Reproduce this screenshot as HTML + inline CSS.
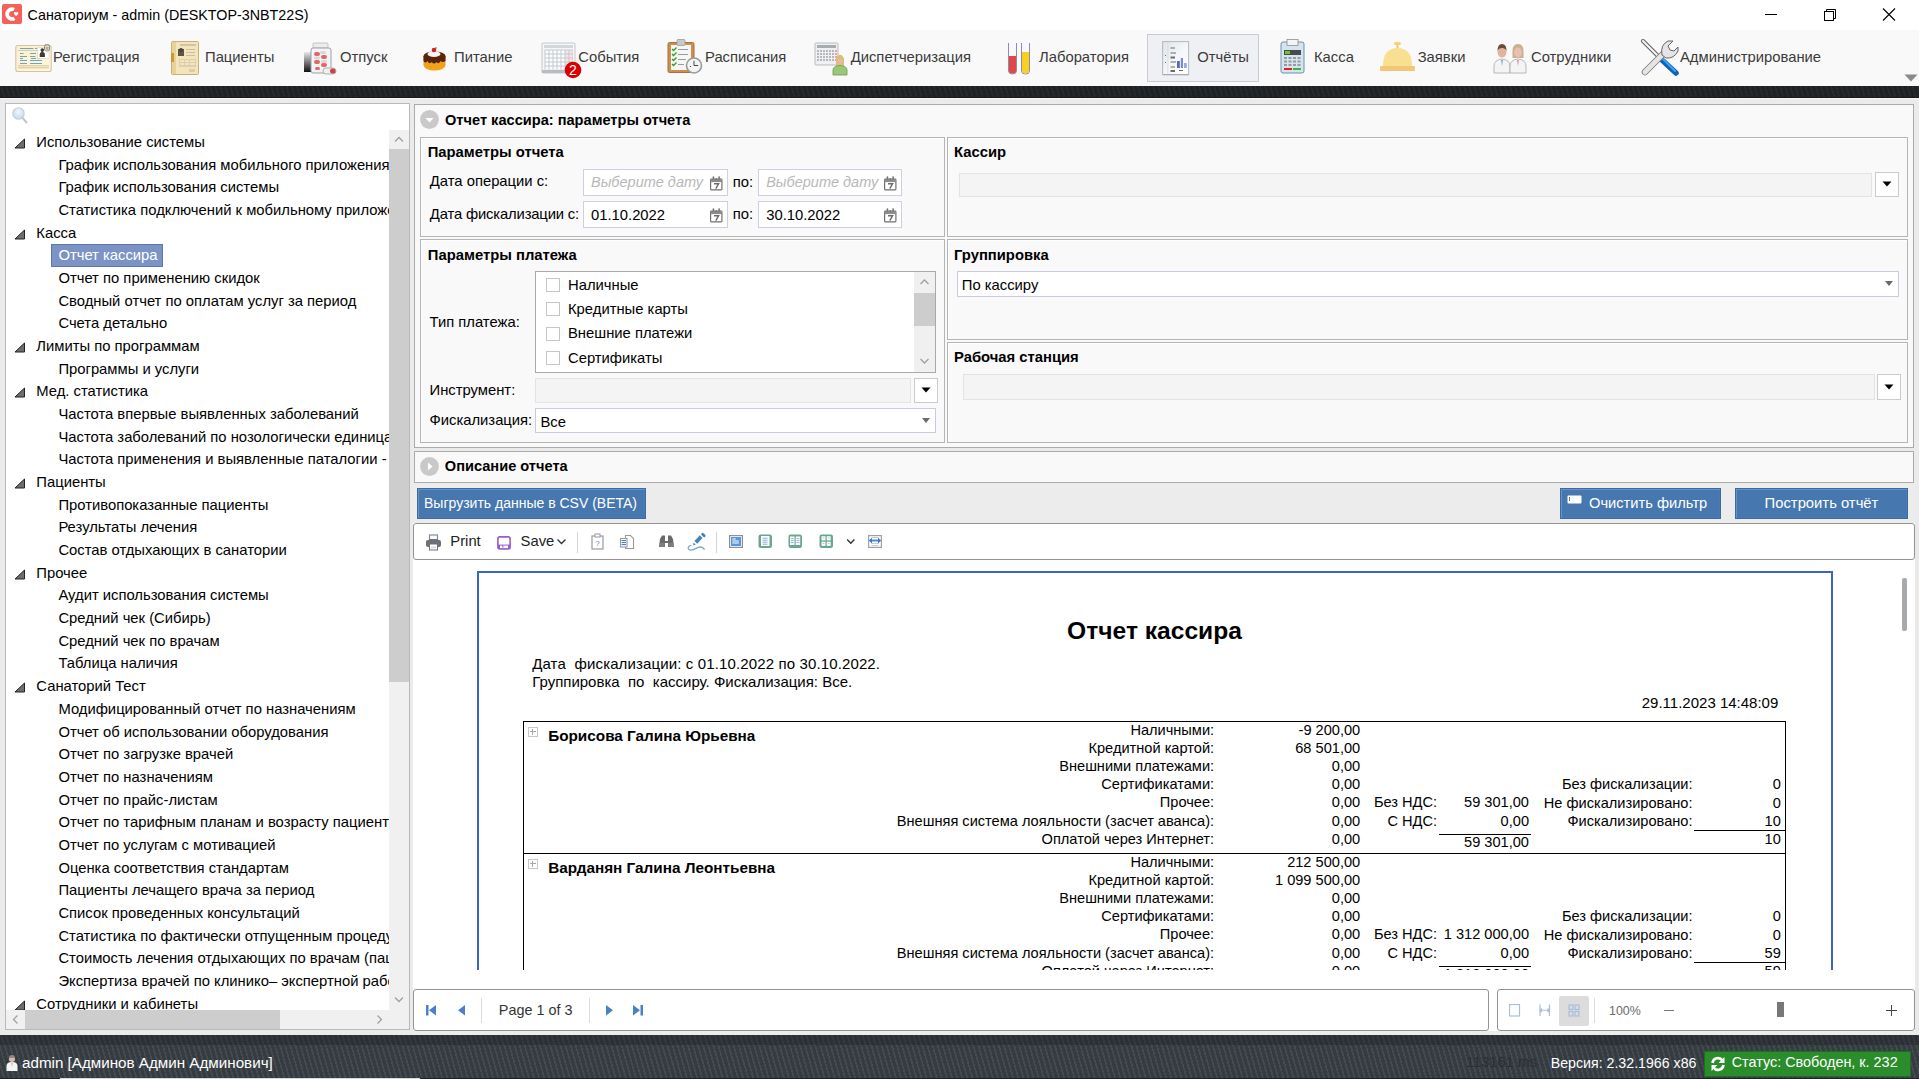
<!DOCTYPE html><html><head><meta charset="utf-8"><title>Санаториум</title><style>
html,body{margin:0;padding:0;}
body{width:1919px;height:1079px;overflow:hidden;position:relative;background:#ebebeb;font-family:"Liberation Sans", sans-serif;color:#000;}
.t{position:absolute;white-space:pre;}
.b{position:absolute;box-sizing:border-box;}
.stripe{background-image:repeating-linear-gradient(74deg, rgba(0,0,0,0) 0px, rgba(0,0,0,0) 3.2px, var(--sc) 3.2px, var(--sc) 4.9px);}

</style></head><body>
<div class="b" style="left:0px;top:0px;width:1919px;height:30px;background:#fff;"></div>
<svg class="b" style="left:2px;top:4px;" width="20" height="20" viewBox="0 0 20 20"><rect x="0" y="0" width="20" height="20" rx="2" fill="#f4605a"/><path d="M12.1 5.6 A4.9 4.9 0 1 0 12.5 14.3" stroke="#fff" stroke-width="3.7" fill="none"/><path d="M14.1 12.3 L12.1 9.9 A1.2 1.2 0 0 1 14.1 8.5 A1.2 1.2 0 0 1 16.1 9.9 Z" fill="#fff"/></svg>
<div class="t" style="left:27.5px;top:7.6px;font-size:14.3px;line-height:14.3px;">Санаториум - admin (DESKTOP-3NBT22S)</div>
<div class="b" style="left:1765px;top:14px;width:12px;height:1px;background:#000;"></div>
<svg class="b" style="left:1822px;top:7px;" width="16" height="16" viewBox="0 0 16 16"><rect x="2.5" y="4.5" width="9" height="9" fill="none" stroke="#000" stroke-width="1"/><path d="M4.5 4.5 V2.5 H13.5 V11.5 H11.5" fill="none" stroke="#000" stroke-width="1"/></svg>
<svg class="b" style="left:1881px;top:7px;" width="16" height="16" viewBox="0 0 16 16"><path d="M2 1.5 L14 13.5 M14 1.5 L2 13.5" stroke="#000" stroke-width="1.1"/></svg>
<div class="b" style="left:0px;top:30px;width:1919px;height:56px;background:#f9f9f9;"></div>
<div class="b" style="left:1147px;top:34px;width:112px;height:48px;background:#eff0f3;border:1px solid #c9ccd2;"></div>
<div class="t" style="left:53.0px;top:49.5px;font-size:14.8px;line-height:14.8px;color:#3b3b3b;">Регистрация</div>
<div class="t" style="left:205.0px;top:49.5px;font-size:14.8px;line-height:14.8px;color:#3b3b3b;">Пациенты</div>
<div class="t" style="left:340.0px;top:49.5px;font-size:14.8px;line-height:14.8px;color:#3b3b3b;">Отпуск</div>
<div class="t" style="left:454.0px;top:49.5px;font-size:14.8px;line-height:14.8px;color:#3b3b3b;">Питание</div>
<div class="t" style="left:578.3px;top:49.5px;font-size:14.8px;line-height:14.8px;color:#3b3b3b;">События</div>
<div class="t" style="left:705.0px;top:49.5px;font-size:14.8px;line-height:14.8px;color:#3b3b3b;">Расписания</div>
<div class="t" style="left:850.7px;top:49.5px;font-size:14.8px;line-height:14.8px;color:#3b3b3b;">Диспетчеризация</div>
<div class="t" style="left:1039.0px;top:49.5px;font-size:14.8px;line-height:14.8px;color:#3b3b3b;">Лаборатория</div>
<div class="t" style="left:1197.3px;top:49.5px;font-size:14.8px;line-height:14.8px;color:#3b3b3b;">Отчёты</div>
<div class="t" style="left:1314.0px;top:49.5px;font-size:14.8px;line-height:14.8px;color:#3b3b3b;">Касса</div>
<div class="t" style="left:1417.7px;top:49.5px;font-size:14.8px;line-height:14.8px;color:#3b3b3b;">Заявки</div>
<div class="t" style="left:1531.0px;top:49.5px;font-size:14.8px;line-height:14.8px;color:#3b3b3b;">Сотрудники</div>
<div class="t" style="left:1680.0px;top:49.5px;font-size:14.8px;line-height:14.8px;color:#3b3b3b;">Администрирование</div>
<svg class="b" style="left:1904px;top:74px;" width="15" height="9" viewBox="0 0 15 9"><path d="M0.5 0.5 L13.5 0.5 L7 7.5 Z" fill="#8a8a8a"/></svg>
<svg class="b" style="left:15px;top:44px;" width="38" height="30" viewBox="0 0 38 30">
    <defs><linearGradient id="gcard" x1="0" y1="0" x2="1" y2="1"><stop offset="0" stop-color="#fbefd0"/><stop offset="1" stop-color="#fff6dc"/></linearGradient></defs>
    <rect x="0.8" y="1.5" width="35.4" height="26" rx="2" fill="url(#gcard)" stroke="#d2c5a5" stroke-width="1.1"/>
    <g fill="#5a96b8" opacity="0.85"><rect x="5" y="4" width="13.5" height="1"/><rect x="20" y="4" width="2" height="1"/>
    <rect x="5" y="9" width="3.5" height="1"/><rect x="15" y="9" width="6" height="1"/>
    <rect x="5" y="12" width="7" height="1"/><rect x="15" y="12" width="5.5" height="1"/>
    <rect x="5" y="14" width="3" height="1"/><rect x="16" y="14" width="5" height="1"/><rect x="22" y="14" width="3" height="1"/>
    <rect x="5" y="16" width="7" height="1"/><rect x="15" y="16" width="12" height="1"/>
    <rect x="5" y="19" width="7" height="1"/><rect x="15" y="19" width="12" height="1"/></g>
    <rect x="3" y="6" width="24" height="1" fill="#d8cba8"/>
    <rect x="3" y="21.3" width="31" height="1" fill="#d0c2a0"/><rect x="3" y="23.3" width="31" height="1" fill="#d0c2a0"/>
    <rect x="22.5" y="3.5" width="11.5" height="11" fill="#fff" stroke="#d8d0c0" stroke-width="0.6"/>
    <path d="M24.7 13 V10 q0 -1.5 2 -2 q-1.2 -0.8 -1.2 -2.2 q0 -1.6 1.8 -1.6 q1.8 0 1.8 1.6 q0 1.4 -1.2 2.2 q2 0.5 2 2 V13 Z" fill="#3e3a34"/>
    <rect x="29.5" y="0.5" width="5" height="6.5" rx="2" fill="none" stroke="#7a7a7a" stroke-width="0.9"/><rect x="30.5" y="2.5" width="3" height="4" fill="#c0b490"/>
    </svg>
<svg class="b" style="left:171px;top:41px;" width="29" height="34" viewBox="0 0 29 34">
    <rect x="0.5" y="0.5" width="27" height="33" rx="1" fill="#f3e4bb" stroke="#c8b07a" stroke-width="1"/>
    <rect x="1" y="1" width="4" height="32" fill="#e9d29a"/><rect x="0" y="12" width="3" height="9" fill="#c89a30"/>
    <rect x="9" y="3" width="16" height="2" fill="#cfc3a8"/>
    <rect x="7" y="8" width="6" height="7" fill="#5b5448"/><circle cx="10" cy="9" r="2" fill="#4a4438"/>
    <g fill="#c9bfa8"><rect x="15" y="8" width="9" height="1"/><rect x="15" y="11" width="9" height="1"/><rect x="15" y="14" width="9" height="1"/>
    <rect x="8" y="18" width="17" height="8" fill="#dccfb0"/></g>
    <g fill="#f3e4bb"><rect x="9" y="19" width="4" height="2"/><rect x="14" y="19" width="4" height="2"/><rect x="19" y="19" width="5" height="2"/><rect x="9" y="22" width="4" height="2"/><rect x="14" y="22" width="4" height="2"/><rect x="19" y="22" width="5" height="2"/></g>
    <rect x="18" y="28" width="6" height="3" fill="#d9cdb0"/>
    </svg>
<svg class="b" style="left:303px;top:42px;" width="35" height="33" viewBox="0 0 35 33">
    <rect x="1" y="10" width="8" height="20" fill="url(#gjar)"/>
    <defs><linearGradient id="gjar" x1="0" y1="0" x2="0" y2="1"><stop offset="0" stop-color="#e8e8e8"/><stop offset="1" stop-color="#101010"/></linearGradient></defs>
    <rect x="10" y="1" width="15" height="5" rx="1" fill="#ededed" stroke="#b8b8c0" stroke-width="0.8"/>
    <rect x="8" y="6" width="20" height="25" rx="2" fill="#f4f4f6" stroke="#9ca0ac" stroke-width="1"/>
    <g fill="#e06868"><rect x="11" y="10" width="6" height="4" rx="2"/><rect x="18" y="13" width="6" height="4" rx="2"/><rect x="11" y="18" width="6" height="4" rx="2"/><rect x="18" y="21" width="6" height="4" rx="2"/><rect x="12" y="25" width="5" height="3" rx="1.5"/></g>
    <g fill="#d8d8dc"><rect x="17" y="9" width="6" height="3" rx="1.5"/><rect x="11" y="14.5" width="6" height="3" rx="1.5"/><rect x="18" y="18" width="6" height="3" rx="1.5"/></g>
    <rect x="20" y="26" width="13" height="6" rx="3" fill="#f0f0f0" stroke="#a0a0a0" stroke-width="0.8"/><rect x="27" y="26.5" width="5.5" height="5" rx="2.5" fill="#d04040"/>
    </svg>
<svg class="b" style="left:422px;top:46px;" width="26" height="26" viewBox="0 0 26 26">
    <ellipse cx="12.5" cy="19" rx="11" ry="5.5" fill="#f0a21c"/>
    <rect x="1.5" y="10" width="22" height="9" fill="#f0a21c"/>
    <ellipse cx="12.5" cy="10" rx="11" ry="4.5" fill="#5a2408"/>
    <path d="M1.5 10 V15 q2 3 4 0 q2 4 4 1 q3 3 5 0 q2 3 4 -1 q2 2 5 0 V10 z" fill="#5a2408"/>
    <ellipse cx="12" cy="8" rx="6.5" ry="3" fill="#f4f4f4"/>
    <circle cx="12" cy="4" r="2.3" fill="#d42020"/><rect x="13" y="1.5" width="2" height="1" fill="#2a9a2a"/>
    </svg>
<svg class="b" style="left:541px;top:42px;" width="36" height="33" viewBox="0 0 36 33">
    <rect x="1" y="1" width="33" height="30" rx="1" fill="#f4f6f8" stroke="#c4c8cc" stroke-width="1"/>
    <rect x="1" y="28" width="33" height="3" fill="#b8bcc0"/>
    <rect x="3" y="3" width="29" height="3" fill="#d4d8dc"/>
    <rect x="3.5" y="7.5" width="28.5" height="20" fill="#c4c8ce"/>
    <rect x="4.5" y="8.5" width="3" height="3" fill="#fbfcfd"/><rect x="8.5" y="8.5" width="3" height="3" fill="#fbfcfd"/><rect x="12.5" y="8.5" width="3" height="3" fill="#fbfcfd"/><rect x="16.5" y="8.5" width="3" height="3" fill="#fbfcfd"/><rect x="20.5" y="8.5" width="3" height="3" fill="#fbfcfd"/><rect x="24.5" y="8.5" width="3" height="3" fill="#f8e4e6"/><rect x="28.5" y="8.5" width="3" height="3" fill="#f8e4e6"/><rect x="4.5" y="12.5" width="3" height="3" fill="#fbfcfd"/><rect x="8.5" y="12.5" width="3" height="3" fill="#fbfcfd"/><rect x="12.5" y="12.5" width="3" height="3" fill="#fbfcfd"/><rect x="16.5" y="12.5" width="3" height="3" fill="#fbfcfd"/><rect x="20.5" y="12.5" width="3" height="3" fill="#fbfcfd"/><rect x="24.5" y="12.5" width="3" height="3" fill="#f8e4e6"/><rect x="28.5" y="12.5" width="3" height="3" fill="#f8e4e6"/><rect x="4.5" y="16.5" width="3" height="3" fill="#fbfcfd"/><rect x="8.5" y="16.5" width="3" height="3" fill="#fbfcfd"/><rect x="12.5" y="16.5" width="3" height="3" fill="#fbfcfd"/><rect x="16.5" y="16.5" width="3" height="3" fill="#fbfcfd"/><rect x="20.5" y="16.5" width="3" height="3" fill="#fbfcfd"/><rect x="24.5" y="16.5" width="3" height="3" fill="#f8e4e6"/><rect x="28.5" y="16.5" width="3" height="3" fill="#f8e4e6"/><rect x="4.5" y="20.5" width="3" height="3" fill="#fbfcfd"/><rect x="8.5" y="20.5" width="3" height="3" fill="#fbfcfd"/><rect x="12.5" y="20.5" width="3" height="3" fill="#fbfcfd"/><rect x="16.5" y="20.5" width="3" height="3" fill="#fbfcfd"/><rect x="20.5" y="20.5" width="3" height="3" fill="#fbfcfd"/><rect x="24.5" y="20.5" width="3" height="3" fill="#f8e4e6"/><rect x="28.5" y="20.5" width="3" height="3" fill="#f8e4e6"/><rect x="4.5" y="24.5" width="3" height="3" fill="#fbfcfd"/><rect x="8.5" y="24.5" width="3" height="3" fill="#fbfcfd"/><rect x="12.5" y="24.5" width="3" height="3" fill="#fbfcfd"/><rect x="16.5" y="24.5" width="3" height="3" fill="#fbfcfd"/><rect x="20.5" y="24.5" width="3" height="3" fill="#fbfcfd"/><rect x="24.5" y="24.5" width="3" height="3" fill="#f8e4e6"/><rect x="28.5" y="24.5" width="3" height="3" fill="#f8e4e6"/>
    </svg>
<svg class="b" style="left:564px;top:61px;" width="18" height="18" viewBox="0 0 18 18"><circle cx="9" cy="9" r="8.3" fill="#d80000"/><text x="9" y="14.2" text-anchor="middle" font-family="Liberation Sans" font-size="14" fill="#fff">2</text></svg>
<svg class="b" style="left:667px;top:39px;" width="36" height="36" viewBox="0 0 36 36">
    <rect x="1" y="3.5" width="26" height="30" rx="1.5" fill="#c99052" stroke="#a87038" stroke-width="1"/>
    <rect x="4" y="6" width="20" height="25" fill="#f6f6f6"/>
    <rect x="10" y="0.5" width="8" height="6" rx="1" fill="#c8c8c8" stroke="#9a9a9a" stroke-width="0.8"/>
    <g stroke="#2aa02a" stroke-width="1.3" fill="none"><path d="M5 10 l1.5 1.5 l3 -3"/><path d="M5 15 l1.5 1.5 l3 -3"/><path d="M5 20 l1.5 1.5 l3 -3"/><path d="M5 25 l1.5 1.5 l3 -3"/></g>
    <g fill="#9a9a9a"><rect x="11" y="10" width="10" height="1"/><rect x="11" y="15" width="10" height="1"/><rect x="11" y="20" width="8" height="1"/><rect x="11" y="25" width="6" height="1"/></g>
    <circle cx="27" cy="26.5" r="7.5" fill="#f4f4f4" stroke="#9a9a9a" stroke-width="1.6"/>
    <path d="M27 21.8 V26.5 H31.2" stroke="#333" stroke-width="0.9" fill="none"/><circle cx="23.5" cy="27.5" r="0.6" fill="#333"/>
    </svg>
<svg class="b" style="left:814px;top:42px;" width="36" height="34" viewBox="0 0 36 34">
    <rect x="1" y="1" width="23" height="22" rx="1" fill="#eef0f2" stroke="#b8bcc0" stroke-width="1"/>
    <rect x="3" y="3" width="19" height="3" fill="#a8acb0"/>
    <rect x="3" y="8" width="2" height="2" fill="#b4b8bc"/><rect x="6" y="8" width="2" height="2" fill="#b4b8bc"/><rect x="9" y="8" width="2" height="2" fill="#b4b8bc"/><rect x="12" y="8" width="2" height="2" fill="#b4b8bc"/><rect x="15" y="8" width="2" height="2" fill="#b4b8bc"/><rect x="18" y="8" width="2" height="2" fill="#b4b8bc"/><rect x="21" y="8" width="2" height="2" fill="#e8a0a8"/><rect x="3" y="11" width="2" height="2" fill="#b4b8bc"/><rect x="6" y="11" width="2" height="2" fill="#b4b8bc"/><rect x="9" y="11" width="2" height="2" fill="#b4b8bc"/><rect x="12" y="11" width="2" height="2" fill="#b4b8bc"/><rect x="15" y="11" width="2" height="2" fill="#b4b8bc"/><rect x="18" y="11" width="2" height="2" fill="#b4b8bc"/><rect x="21" y="11" width="2" height="2" fill="#e8a0a8"/><rect x="3" y="14" width="2" height="2" fill="#b4b8bc"/><rect x="6" y="14" width="2" height="2" fill="#b4b8bc"/><rect x="9" y="14" width="2" height="2" fill="#b4b8bc"/><rect x="12" y="14" width="2" height="2" fill="#b4b8bc"/><rect x="15" y="14" width="2" height="2" fill="#b4b8bc"/><rect x="18" y="14" width="2" height="2" fill="#b4b8bc"/><rect x="21" y="14" width="2" height="2" fill="#e8a0a8"/><rect x="3" y="17" width="2" height="2" fill="#b4b8bc"/><rect x="6" y="17" width="2" height="2" fill="#b4b8bc"/><rect x="9" y="17" width="2" height="2" fill="#b4b8bc"/><rect x="12" y="17" width="2" height="2" fill="#b4b8bc"/><rect x="15" y="17" width="2" height="2" fill="#b4b8bc"/><rect x="18" y="17" width="2" height="2" fill="#b4b8bc"/><rect x="21" y="17" width="2" height="2" fill="#e8a0a8"/>
    <path d="M22 16 q4 -7 8 0 v8 h-8 z" fill="#d8c070"/>
    <ellipse cx="26" cy="19.5" rx="3" ry="3.6" fill="#e8b8a0"/>
    <path d="M19 33 v-5 q0 -4 7 -4.5 q7 0.5 7 4.5 v5 z" fill="#98c878" stroke="#6a9a50" stroke-width="0.8"/>
    </svg>
<svg class="b" style="left:1006px;top:42px;" width="26" height="34" viewBox="0 0 26 34">
    <path d="M2.5 1 V29 q0 3 4 3 q4 0 4 -3 V1" fill="#f8f8fc" stroke="#8a8cb0" stroke-width="1"/>
    <path d="M3 14 V29 q0 2.5 3.5 2.5 q3.5 0 3.5 -2.5 V14 z" fill="#e04848"/>
    <path d="M15.5 1 V29 q0 3 4 3 q4 0 4 -3 V1" fill="#f8f8fc" stroke="#8a8cb0" stroke-width="1"/>
    <path d="M16 10 V29 q0 2.5 3.5 2.5 q3.5 0 3.5 -2.5 V10 z" fill="#f8d020"/>
    </svg>
<svg class="b" style="left:1162px;top:41px;" width="28" height="35" viewBox="0 0 28 35">
    <defs><linearGradient id="grep" x1="0" y1="0" x2="1" y2="1"><stop offset="0" stop-color="#dfe5ea"/><stop offset="0.5" stop-color="#f4f6f8"/><stop offset="1" stop-color="#ffffff"/></linearGradient></defs>
    <rect x="0.6" y="0.6" width="26" height="33" fill="url(#grep)" stroke="#b8bcc0" stroke-width="1.1"/>
    <rect x="1.2" y="33" width="25.5" height="1.2" fill="#a8acb0"/>
    <rect x="5.5" y="1.2" width="0.8" height="32" fill="#d4d8dc"/>
    <g fill="#4a4a4a" opacity="0.8"><rect x="8.5" y="6.5" width="4.5" height="1"/><rect x="8.5" y="11.5" width="5.5" height="1"/><rect x="8.5" y="15.5" width="4.5" height="2"/><rect x="8.5" y="20.5" width="5.5" height="1"/><rect x="8.5" y="25.5" width="4.5" height="1"/><rect x="8.5" y="29" width="4.5" height="2"/>
    <rect x="3" y="14" width="1" height="1"/><rect x="3" y="21" width="1" height="1"/><rect x="17" y="29" width="4" height="1"/></g>
    <rect x="15" y="20" width="2.8" height="7" fill="#5a68b8"/><rect x="18.8" y="17" width="2.2" height="10" fill="#7a88d8"/><rect x="22" y="22" width="2.8" height="5" fill="#9aa8e4"/>
    </svg>
<svg class="b" style="left:1280px;top:39px;" width="26" height="36" viewBox="0 0 26 36">
    <rect x="1" y="3" width="23" height="31" rx="2" fill="#d4e4f0" stroke="#7090a8" stroke-width="1"/>
    <rect x="7" y="0.5" width="11" height="6" fill="#f4f4f4" stroke="#909090" stroke-width="0.8"/>
    <rect x="4" y="11" width="17" height="5" fill="#4a4a4a"/><rect x="5" y="12" width="5" height="3" fill="#70c040"/>
    <g fill="#9a9a9a"><rect x="4.0" y="18.0" width="3" height="2"/><rect x="8.5" y="18.0" width="3" height="2"/><rect x="13.0" y="18.0" width="3" height="2"/><rect x="17.5" y="18.0" width="3" height="2"/><rect x="4.0" y="21.5" width="3" height="2"/><rect x="8.5" y="21.5" width="3" height="2"/><rect x="13.0" y="21.5" width="3" height="2"/><rect x="17.5" y="21.5" width="3" height="2"/><rect x="4.0" y="25.0" width="3" height="2"/><rect x="8.5" y="25.0" width="3" height="2"/><rect x="13.0" y="25.0" width="3" height="2"/><rect x="17.5" y="25.0" width="3" height="2"/></g>
    <rect x="4" y="29" width="8" height="2" fill="#e02020"/><rect x="13" y="29" width="8" height="2" fill="#40b040"/>
    </svg>
<svg class="b" style="left:1379px;top:41px;" width="38" height="32" viewBox="0 0 38 32">
    <rect x="15" y="1" width="7" height="3" rx="1.5" fill="#f4d47a"/><rect x="17.5" y="3" width="2" height="4" fill="#f0cc70"/>
    <path d="M4 25 q0 -18 14.5 -18 q14.5 0 14.5 18 z" fill="#f8e090"/>
    <rect x="1" y="25" width="35" height="5" rx="1" fill="#f0c878"/>
    </svg>
<svg class="b" style="left:1493px;top:43px;" width="36" height="31" viewBox="0 0 36 31">
    <path d="M1 30 v-7 q0 -6 8 -7 q8 1 8 7 v7 z" fill="#f4f4f4" stroke="#a8a8a8" stroke-width="0.8"/>
    <path d="M8 17 l1 6 l1 -6 z" fill="#7aa8c8"/>
    <ellipse cx="9" cy="9" rx="4.5" ry="5.5" fill="#e0b4a0"/><path d="M4.5 8 q0 -7 4.5 -7 q4.5 0 4.5 7 q-1 -3 -4.5 -3 q-3.5 0 -4.5 3 z" fill="#6a4a3a"/>
    <path d="M17 30 v-7 q0 -6 8 -7 q8 1 8 7 v7 z" fill="#f4f4f4" stroke="#a8a8a8" stroke-width="0.8"/>
    <path d="M24 17 l1 6 l1 -6 z" fill="#e090a8"/>
    <path d="M19.5 15 v-7 q0 -7 5.5 -7 q5.5 0 5.5 7 v7 z" fill="#c8b090"/>
    <ellipse cx="25" cy="9.5" rx="4" ry="5" fill="#e8c0b0"/>
    </svg>
<svg class="b" style="left:1640px;top:38px;" width="40" height="40" viewBox="0 0 40 40">
    <path d="M3 3 L21 21" stroke="#555" stroke-width="4" stroke-linecap="round"/>
    <path d="M3 3 L21 21" stroke="#f0f0f0" stroke-width="2.4" stroke-linecap="round"/>
    <path d="M22 22 L36 35" stroke="#1060c0" stroke-width="5.5" stroke-linecap="round"/>
    <path d="M23 21 L35 33" stroke="#40a0f0" stroke-width="2" stroke-linecap="round"/>
    <path d="M5 34 L25 14" stroke="#777" stroke-width="6.5" stroke-linecap="round"/>
    <path d="M5 34 L25 14" stroke="#e4e4e4" stroke-width="5" stroke-linecap="round"/>
    <path d="M22 17 q-2 -10 6 -14 h5 l-5 5 l2 4 l4 1 l4 -4 v4 q-4 8 -12 7 z" fill="#e4e4e4" stroke="#666" stroke-width="1"/>
    </svg>
<div class="b stripe" style="left:0;top:86px;width:1919px;height:12px;background-color:#1f2225;--sc:rgba(255,255,255,0.035);border-bottom:1px solid #18191b;"></div>
<div class="b" style="left:0px;top:98px;width:1919px;height:1px;background:#f6f6f6;"></div>
<div class="b" style="left:5px;top:103px;width:405px;height:27px;background:#fff;border:1px solid #b9b9b9;"></div>
<svg class="b" style="left:11px;top:106px;" width="18" height="20" viewBox="0 0 18 20"><defs><radialGradient id="mg" cx="0.5" cy="0.35" r="0.6"><stop offset="0" stop-color="#f0f6fc"/><stop offset="1" stop-color="#c8dcf0"/></radialGradient></defs><circle cx="7.5" cy="7.5" r="5.6" fill="url(#mg)" stroke="#c9d2da" stroke-width="1.4"/><path d="M11.5 11.8 L15.5 16.5" stroke="#c4c4c4" stroke-width="2" stroke-linecap="round"/></svg>
<div class="b" style="left:5px;top:128px;width:405px;height:902px;background:#fff;border:1px solid #b9b9b9;border-top:none;"></div>
<div class="b" style="left:389px;top:130px;width:20px;height:880px;background:#f0f0f0;"></div>
<div class="b" style="left:389px;top:149px;width:20px;height:533px;background:#cdcdcd;"></div>
<svg class="b" style="left:389px;top:130px;" width="20" height="19" viewBox="0 0 20 19"><path d="M6 11.5 L10 7.5 L14 11.5" stroke="#a0a0a0" stroke-width="1.3" fill="none"/></svg>
<svg class="b" style="left:389px;top:990px;" width="20" height="19" viewBox="0 0 20 19"><path d="M6 7.5 L10 11.5 L14 7.5" stroke="#a0a0a0" stroke-width="1.3" fill="none"/></svg>
<div class="b" style="left:6px;top:1010px;width:383px;height:19px;background:#f0f0f0;"></div>
<div class="b" style="left:25px;top:1010px;width:255px;height:19px;background:#cdcdcd;"></div>
<svg class="b" style="left:6px;top:1010px;" width="19" height="19" viewBox="0 0 19 19"><path d="M11.5 5.5 L7.5 9.5 L11.5 13.5" stroke="#a0a0a0" stroke-width="1.3" fill="none"/></svg>
<svg class="b" style="left:370px;top:1010px;" width="19" height="19" viewBox="0 0 19 19"><path d="M7.5 5.5 L11.5 9.5 L7.5 13.5" stroke="#a0a0a0" stroke-width="1.3" fill="none"/></svg>
<div class="b" style="left:389px;top:1010px;width:20px;height:19px;background:#f0f0f0;"></div>
<div class="b" style="left:6px;top:130px;width:383px;height:880px;overflow:hidden;">
<svg class="b" style="left:8px;top:7.8px" width="12" height="11" viewBox="0 0 12 11"><path d="M1 10 L10.5 1 V10 Z" fill="#6e6e6e" stroke="#222" stroke-width="1" stroke-linejoin="miter"/></svg>
<div class="t" style="left:30.3px;top:4.8px;font-size:14.8px;line-height:14.8px;">Использование системы</div>
<div class="t" style="left:52.4px;top:27.5px;font-size:14.8px;line-height:14.8px;">График использования мобильного приложения</div>
<div class="t" style="left:52.4px;top:50.1px;font-size:14.8px;line-height:14.8px;">График использования системы</div>
<div class="t" style="left:52.4px;top:72.8px;font-size:14.8px;line-height:14.8px;">Статистика подключений к мобильному приложению</div>
<svg class="b" style="left:8px;top:98.5px" width="12" height="11" viewBox="0 0 12 11"><path d="M1 10 L10.5 1 V10 Z" fill="#6e6e6e" stroke="#222" stroke-width="1" stroke-linejoin="miter"/></svg>
<div class="t" style="left:30.3px;top:95.5px;font-size:14.8px;line-height:14.8px;">Касса</div>
<div class="b" style="left:45px;top:114px;width:112px;height:23px;background:#7c93c6;border:1px solid #5f77aa;"></div>
<div class="t" style="left:52.4px;top:118.2px;font-size:14.8px;line-height:14.8px;color:#fff;">Отчет кассира</div>
<div class="t" style="left:52.4px;top:140.9px;font-size:14.8px;line-height:14.8px;">Отчет по применению скидок</div>
<div class="t" style="left:52.4px;top:163.5px;font-size:14.8px;line-height:14.8px;">Сводный отчет по оплатам услуг за период</div>
<div class="t" style="left:52.4px;top:186.2px;font-size:14.8px;line-height:14.8px;">Счета детально</div>
<svg class="b" style="left:8px;top:211.9px" width="12" height="11" viewBox="0 0 12 11"><path d="M1 10 L10.5 1 V10 Z" fill="#6e6e6e" stroke="#222" stroke-width="1" stroke-linejoin="miter"/></svg>
<div class="t" style="left:30.3px;top:208.9px;font-size:14.8px;line-height:14.8px;">Лимиты по программам</div>
<div class="t" style="left:52.4px;top:231.6px;font-size:14.8px;line-height:14.8px;">Программы и услуги</div>
<svg class="b" style="left:8px;top:257.3px" width="12" height="11" viewBox="0 0 12 11"><path d="M1 10 L10.5 1 V10 Z" fill="#6e6e6e" stroke="#222" stroke-width="1" stroke-linejoin="miter"/></svg>
<div class="t" style="left:30.3px;top:254.3px;font-size:14.8px;line-height:14.8px;">Мед. статистика</div>
<div class="t" style="left:52.4px;top:276.9px;font-size:14.8px;line-height:14.8px;">Частота впервые выявленных заболеваний</div>
<div class="t" style="left:52.4px;top:299.6px;font-size:14.8px;line-height:14.8px;">Частота заболеваний по нозологически единицам</div>
<div class="t" style="left:52.4px;top:322.3px;font-size:14.8px;line-height:14.8px;">Частота применения и выявленные паталогии - МКБ</div>
<svg class="b" style="left:8px;top:348.0px" width="12" height="11" viewBox="0 0 12 11"><path d="M1 10 L10.5 1 V10 Z" fill="#6e6e6e" stroke="#222" stroke-width="1" stroke-linejoin="miter"/></svg>
<div class="t" style="left:30.3px;top:345.0px;font-size:14.8px;line-height:14.8px;">Пациенты</div>
<div class="t" style="left:52.4px;top:367.7px;font-size:14.8px;line-height:14.8px;">Противопоказанные пациенты</div>
<div class="t" style="left:52.4px;top:390.3px;font-size:14.8px;line-height:14.8px;">Результаты лечения</div>
<div class="t" style="left:52.4px;top:413.0px;font-size:14.8px;line-height:14.8px;">Состав отдыхающих в санатории</div>
<svg class="b" style="left:8px;top:438.7px" width="12" height="11" viewBox="0 0 12 11"><path d="M1 10 L10.5 1 V10 Z" fill="#6e6e6e" stroke="#222" stroke-width="1" stroke-linejoin="miter"/></svg>
<div class="t" style="left:30.3px;top:435.7px;font-size:14.8px;line-height:14.8px;">Прочее</div>
<div class="t" style="left:52.4px;top:458.4px;font-size:14.8px;line-height:14.8px;">Аудит использования системы</div>
<div class="t" style="left:52.4px;top:481.1px;font-size:14.8px;line-height:14.8px;">Средний чек (Сибирь)</div>
<div class="t" style="left:52.4px;top:503.7px;font-size:14.8px;line-height:14.8px;">Средний чек по врачам</div>
<div class="t" style="left:52.4px;top:526.4px;font-size:14.8px;line-height:14.8px;">Таблица наличия</div>
<svg class="b" style="left:8px;top:552.1px" width="12" height="11" viewBox="0 0 12 11"><path d="M1 10 L10.5 1 V10 Z" fill="#6e6e6e" stroke="#222" stroke-width="1" stroke-linejoin="miter"/></svg>
<div class="t" style="left:30.3px;top:549.1px;font-size:14.8px;line-height:14.8px;">Санаторий Тест</div>
<div class="t" style="left:52.4px;top:571.8px;font-size:14.8px;line-height:14.8px;">Модифицированный отчет по назначениям</div>
<div class="t" style="left:52.4px;top:594.5px;font-size:14.8px;line-height:14.8px;">Отчет об использовании оборудования</div>
<div class="t" style="left:52.4px;top:617.1px;font-size:14.8px;line-height:14.8px;">Отчет по загрузке врачей</div>
<div class="t" style="left:52.4px;top:639.8px;font-size:14.8px;line-height:14.8px;">Отчет по назначениям</div>
<div class="t" style="left:52.4px;top:662.5px;font-size:14.8px;line-height:14.8px;">Отчет по прайс-листам</div>
<div class="t" style="left:52.4px;top:685.2px;font-size:14.8px;line-height:14.8px;">Отчет по тарифным планам и возрасту пациентов</div>
<div class="t" style="left:52.4px;top:707.9px;font-size:14.8px;line-height:14.8px;">Отчет по услугам с мотивацией</div>
<div class="t" style="left:52.4px;top:730.5px;font-size:14.8px;line-height:14.8px;">Оценка соответствия стандартам</div>
<div class="t" style="left:52.4px;top:753.2px;font-size:14.8px;line-height:14.8px;">Пациенты лечащего врача за период</div>
<div class="t" style="left:52.4px;top:775.9px;font-size:14.8px;line-height:14.8px;">Список проведенных консультаций</div>
<div class="t" style="left:52.4px;top:798.6px;font-size:14.8px;line-height:14.8px;">Статистика по фактически отпущенным процедурам</div>
<div class="t" style="left:52.4px;top:821.3px;font-size:14.8px;line-height:14.8px;">Стоимость лечения отдыхающих по врачам (пациентам)</div>
<div class="t" style="left:52.4px;top:843.9px;font-size:14.8px;line-height:14.8px;">Экспертиза врачей по клинико– экспертной работе</div>
<svg class="b" style="left:8px;top:869.6px" width="12" height="11" viewBox="0 0 12 11"><path d="M1 10 L10.5 1 V10 Z" fill="#6e6e6e" stroke="#222" stroke-width="1" stroke-linejoin="miter"/></svg>
<div class="t" style="left:30.3px;top:866.6px;font-size:14.8px;line-height:14.8px;">Сотрудники и кабинеты</div>
</div>
<div class="b" style="left:414px;top:104px;width:1500px;height:344px;background:#f9f9f9;border:1px solid #ababab;"></div>
<svg class="b" style="left:420px;top:110px;" width="19" height="19" viewBox="0 0 19 19"><circle cx="9.5" cy="9.5" r="9.4" fill="#c9c9c9"/><path d="M5.5 8 L13.5 8 L9.5 12.5 Z" fill="#fff"/></svg>
<div class="t" style="left:445.0px;top:112.8px;font-size:14.6px;line-height:14.6px;font-weight:700;">Отчет кассира: параметры отчета</div>
<div class="b" style="left:420px;top:137px;width:525px;height:100px;border:1px solid #b5b5b5;box-shadow:inset 1px 1px 0 #fff;"></div>
<div class="b" style="left:947px;top:137px;width:961px;height:100px;border:1px solid #b5b5b5;box-shadow:inset 1px 1px 0 #fff;"></div>
<div class="b" style="left:420px;top:239px;width:525px;height:204px;border:1px solid #b5b5b5;box-shadow:inset 1px 1px 0 #fff;"></div>
<div class="b" style="left:947px;top:239px;width:961px;height:101px;border:1px solid #b5b5b5;box-shadow:inset 1px 1px 0 #fff;"></div>
<div class="b" style="left:947px;top:342px;width:961px;height:101px;border:1px solid #b5b5b5;box-shadow:inset 1px 1px 0 #fff;"></div>
<div class="t" style="left:427.7px;top:145.3px;font-size:14.8px;line-height:14.8px;font-weight:700;">Параметры отчета</div>
<div class="t" style="left:429.8px;top:174.0px;font-size:14.8px;line-height:14.8px;">Дата операции с:</div>
<div class="t" style="left:429.8px;top:206.5px;font-size:14.8px;line-height:14.8px;letter-spacing:-0.15px;">Дата фискализации с:</div>
<div class="b" style="left:583px;top:169px;width:145px;height:27px;background:#fff;border:1px solid #cdd0e0;"></div>
<svg class="b" style="left:710px;top:176px;" width="13" height="15" viewBox="0 0 13 15"><rect x="0.6" y="3.1" width="11.3" height="10.8" rx="0.8" fill="#fff" stroke="#707070" stroke-width="1.2"/><rect x="0.6" y="3.1" width="11.3" height="3" fill="#8c8c8c"/><rect x="2.6" y="0.3" width="1.6" height="3.5" rx="0.6" fill="#777"/><rect x="8.3" y="0.3" width="1.6" height="3.5" rx="0.6" fill="#777"/><rect x="5.5" y="2.2" width="1.5" height="2" fill="#777"/><path d="M4 7.8 H8.6 L5.8 12.6" stroke="#6a6a6a" stroke-width="1.4" fill="none"/></svg>
<div class="b" style="left:583px;top:201px;width:145px;height:27px;background:#fff;border:1px solid #cdd0e0;"></div>
<svg class="b" style="left:710px;top:208px;" width="13" height="15" viewBox="0 0 13 15"><rect x="0.6" y="3.1" width="11.3" height="10.8" rx="0.8" fill="#fff" stroke="#707070" stroke-width="1.2"/><rect x="0.6" y="3.1" width="11.3" height="3" fill="#8c8c8c"/><rect x="2.6" y="0.3" width="1.6" height="3.5" rx="0.6" fill="#777"/><rect x="8.3" y="0.3" width="1.6" height="3.5" rx="0.6" fill="#777"/><rect x="5.5" y="2.2" width="1.5" height="2" fill="#777"/><path d="M4 7.8 H8.6 L5.8 12.6" stroke="#6a6a6a" stroke-width="1.4" fill="none"/></svg>
<div class="b" style="left:758px;top:169px;width:144px;height:27px;background:#fff;border:1px solid #cdd0e0;"></div>
<svg class="b" style="left:884px;top:176px;" width="13" height="15" viewBox="0 0 13 15"><rect x="0.6" y="3.1" width="11.3" height="10.8" rx="0.8" fill="#fff" stroke="#707070" stroke-width="1.2"/><rect x="0.6" y="3.1" width="11.3" height="3" fill="#8c8c8c"/><rect x="2.6" y="0.3" width="1.6" height="3.5" rx="0.6" fill="#777"/><rect x="8.3" y="0.3" width="1.6" height="3.5" rx="0.6" fill="#777"/><rect x="5.5" y="2.2" width="1.5" height="2" fill="#777"/><path d="M4 7.8 H8.6 L5.8 12.6" stroke="#6a6a6a" stroke-width="1.4" fill="none"/></svg>
<div class="b" style="left:758px;top:201px;width:144px;height:27px;background:#fff;border:1px solid #cdd0e0;"></div>
<svg class="b" style="left:884px;top:208px;" width="13" height="15" viewBox="0 0 13 15"><rect x="0.6" y="3.1" width="11.3" height="10.8" rx="0.8" fill="#fff" stroke="#707070" stroke-width="1.2"/><rect x="0.6" y="3.1" width="11.3" height="3" fill="#8c8c8c"/><rect x="2.6" y="0.3" width="1.6" height="3.5" rx="0.6" fill="#777"/><rect x="8.3" y="0.3" width="1.6" height="3.5" rx="0.6" fill="#777"/><rect x="5.5" y="2.2" width="1.5" height="2" fill="#777"/><path d="M4 7.8 H8.6 L5.8 12.6" stroke="#6a6a6a" stroke-width="1.4" fill="none"/></svg>
<div class="t" style="left:591.0px;top:175.2px;font-size:14.5px;line-height:14.5px;color:#b8b8b8;font-style:italic;">Выберите дату</div>
<div class="t" style="left:766.2px;top:175.2px;font-size:14.5px;line-height:14.5px;color:#b8b8b8;font-style:italic;">Выберите дату</div>
<div class="t" style="left:591.0px;top:208.1px;font-size:14.8px;line-height:14.8px;">01.10.2022</div>
<div class="t" style="left:766.2px;top:208.1px;font-size:14.8px;line-height:14.8px;">30.10.2022</div>
<div class="t" style="left:732.7px;top:174.5px;font-size:14.8px;line-height:14.8px;">по:</div>
<div class="t" style="left:732.7px;top:206.5px;font-size:14.8px;line-height:14.8px;">по:</div>
<div class="t" style="left:954.0px;top:145.3px;font-size:14.8px;line-height:14.8px;font-weight:700;">Кассир</div>
<div class="b" style="left:959px;top:173px;width:913px;height:24px;background:#f4f4f4;border:1px solid #e3e3e3;"></div>
<div class="b" style="left:1875px;top:172px;width:24px;height:25px;background:#fff;border:1px solid #cbcbcb;"></div>
<svg class="b" style="left:1881px;top:180px;" width="12" height="8" viewBox="0 0 12 8"><path d="M1.5 1.5 L10.5 1.5 L6 6.5 Z" fill="#000"/></svg>
<div class="t" style="left:427.8px;top:247.5px;font-size:14.8px;line-height:14.8px;font-weight:700;">Параметры платежа</div>
<div class="b" style="left:535px;top:271px;width:401px;height:102px;background:#fff;border:1px solid #a9a9a9;"></div>
<div class="b" style="left:914px;top:272px;width:21px;height:100px;background:#f0f0f0;"></div>
<div class="b" style="left:914px;top:293px;width:21px;height:33px;background:#cdcdcd;"></div>
<svg class="b" style="left:914px;top:275px;" width="21" height="14" viewBox="0 0 21 14"><path d="M6.5 9 L10.5 5 L14.5 9" stroke="#a0a0a0" stroke-width="1.3" fill="none"/></svg>
<svg class="b" style="left:914px;top:354px;" width="21" height="14" viewBox="0 0 21 14"><path d="M6.5 5 L10.5 9 L14.5 5" stroke="#a0a0a0" stroke-width="1.3" fill="none"/></svg>
<div class="b" style="left:546px;top:278px;width:14px;height:14px;background:#fff;border:1px solid #c6c6c6;"></div>
<div class="t" style="left:568.0px;top:277.9px;font-size:14.8px;line-height:14.8px;">Наличные</div>
<div class="b" style="left:546px;top:302px;width:14px;height:14px;background:#fff;border:1px solid #c6c6c6;"></div>
<div class="t" style="left:568.0px;top:302.1px;font-size:14.8px;line-height:14.8px;">Кредитные карты</div>
<div class="b" style="left:546px;top:327px;width:14px;height:14px;background:#fff;border:1px solid #c6c6c6;"></div>
<div class="t" style="left:568.0px;top:326.4px;font-size:14.8px;line-height:14.8px;">Внешние платежи</div>
<div class="b" style="left:546px;top:351px;width:14px;height:14px;background:#fff;border:1px solid #c6c6c6;"></div>
<div class="t" style="left:568.0px;top:350.6px;font-size:14.8px;line-height:14.8px;">Сертификаты</div>
<div class="t" style="left:429.5px;top:314.7px;font-size:14.8px;line-height:14.8px;">Тип платежа:</div>
<div class="t" style="left:429.5px;top:383.0px;font-size:14.8px;line-height:14.8px;">Инструмент:</div>
<div class="b" style="left:535px;top:378px;width:376px;height:25px;background:#f4f4f4;border:1px solid #e3e3e3;"></div>
<div class="b" style="left:914px;top:378px;width:24px;height:25px;background:#fff;border:1px solid #cbcbcb;"></div>
<svg class="b" style="left:920px;top:386px;" width="12" height="8" viewBox="0 0 12 8"><path d="M1.5 1.5 L10.5 1.5 L6 6.5 Z" fill="#000"/></svg>
<div class="t" style="left:429.5px;top:413.1px;font-size:14.8px;line-height:14.8px;">Фискализация:</div>
<div class="b" style="left:535px;top:408px;width:401px;height:25px;background:#fff;border:1px solid #c9cbdd;"></div>
<svg class="b" style="left:921px;top:417px;" width="10" height="7" viewBox="0 0 10 7"><path d="M1 1 L9 1 L5 6 Z" fill="#6a6a6a"/></svg>
<div class="t" style="left:540.4px;top:414.5px;font-size:14.8px;line-height:14.8px;">Все</div>
<div class="t" style="left:954.0px;top:247.5px;font-size:14.8px;line-height:14.8px;font-weight:700;">Группировка</div>
<div class="b" style="left:957px;top:271px;width:942px;height:26px;background:#fff;border:1px solid #c9cbdd;"></div>
<svg class="b" style="left:1884px;top:280px;" width="10" height="7" viewBox="0 0 10 7"><path d="M1 1 L9 1 L5 6 Z" fill="#6a6a6a"/></svg>
<div class="t" style="left:961.8px;top:277.5px;font-size:14.8px;line-height:14.8px;">По кассиру</div>
<div class="t" style="left:954.0px;top:350.0px;font-size:14.8px;line-height:14.8px;font-weight:700;">Рабочая станция</div>
<div class="b" style="left:963px;top:374px;width:912px;height:26px;background:#f4f4f4;border:1px solid #e3e3e3;"></div>
<div class="b" style="left:1877px;top:374px;width:24px;height:26px;background:#fff;border:1px solid #cbcbcb;"></div>
<svg class="b" style="left:1883px;top:383px;" width="12" height="8" viewBox="0 0 12 8"><path d="M1.5 1.5 L10.5 1.5 L6 6.5 Z" fill="#000"/></svg>
<div class="b" style="left:414px;top:451px;width:1500px;height:32px;background:#f9f9f9;border:1px solid #ababab;"></div>
<svg class="b" style="left:420px;top:457px;" width="19" height="19" viewBox="0 0 19 19"><circle cx="9.5" cy="9.5" r="9.4" fill="#c9c9c9"/><path d="M8 5.5 L12.5 9.5 L8 13.5 Z" fill="#fff"/></svg>
<div class="t" style="left:444.8px;top:458.6px;font-size:14.6px;line-height:14.6px;font-weight:700;">Описание отчета</div>
<div class="b" style="left:413px;top:483px;width:1502px;height:552px;background:#ececec;"></div>
<div class="b" style="left:417px;top:488px;width:229px;height:31px;background:#4677ae;border:1px solid #3b6ba6;box-shadow:inset 1px 1px 0 #6a92bf, inset -1px -1px 0 #4a7ab0;"></div>
<div class="t" style="left:424.0px;top:495.9px;font-size:14.0px;line-height:14.0px;color:#fff;">Выгрузить данные в CSV (BETA)</div>
<div class="b" style="left:1560px;top:488px;width:161px;height:31px;background:#4677ae;border:1px solid #3b6ba6;box-shadow:inset 1px 1px 0 #6a92bf, inset -1px -1px 0 #4a7ab0;"></div>
<svg class="b" style="left:1567px;top:495px;" width="16" height="10" viewBox="0 0 16 10"><rect x="0.5" y="0.5" width="14" height="8" rx="1" fill="#fff"/><rect x="2" y="2" width="1" height="4" fill="#777"/></svg>
<div class="t" style="left:1589.0px;top:495.6px;font-size:14.7px;line-height:14.7px;color:#fff;">Очистить фильтр</div>
<div class="b" style="left:1735px;top:488px;width:173px;height:31px;background:#4677ae;border:1px solid #3b6ba6;box-shadow:inset 1px 1px 0 #6a92bf, inset -1px -1px 0 #4a7ab0;"></div>
<div class="t" style="left:1764.6px;top:495.5px;font-size:14.8px;line-height:14.8px;color:#fff;">Построить отчёт</div>
<div class="b" style="left:413px;top:523px;width:1502px;height:512px;background:#fff;"></div>
<div class="b" style="left:1915px;top:523px;width:4px;height:512px;background:#e9e9e9;"></div>
<div class="b" style="left:413px;top:523px;width:1502px;height:37px;background:#fff;border:1px solid #939393;border-radius:3px;"></div>
<svg class="b" style="left:425px;top:534px;" width="18" height="17" viewBox="0 0 18 17"><rect x="4.5" y="1" width="8" height="5" fill="#fff" stroke="#8a8a8a" stroke-width="1.2"/><rect x="4.5" y="5" width="8" height="0.8" fill="#3a6ab0"/><rect x="1" y="6" width="15" height="7" rx="2" fill="#707070"/><rect x="4.5" y="10" width="8" height="6" fill="#fff" stroke="#707070" stroke-width="1"/><rect x="6" y="12.5" width="5" height="2" fill="#cfe0f4"/></svg>
<div class="t" style="left:450.3px;top:534.0px;font-size:14.8px;line-height:14.8px;color:#222;">Print</div>
<svg class="b" style="left:497px;top:536px;" width="14" height="14" viewBox="0 0 14 14"><rect x="0.9" y="0.9" width="12.2" height="12" rx="1.8" fill="#fff" stroke="#9a5cc4" stroke-width="1.6"/><rect x="1" y="8.6" width="12" height="4.3" fill="#9a5cc4"/><rect x="3" y="9.6" width="8" height="2.5" fill="#fff"/><rect x="5.2" y="9.3" width="1.2" height="2.2" fill="#9a5cc4"/></svg>
<div class="t" style="left:520.6px;top:534.0px;font-size:14.8px;line-height:14.8px;color:#222;">Save</div>
<svg class="b" style="left:556px;top:538px;" width="11" height="8" viewBox="0 0 11 8"><path d="M1.5 1.5 L5.5 5.5 L9.5 1.5" stroke="#333" stroke-width="1.3" fill="none"/></svg>
<div class="b" style="left:577px;top:532px;width:1px;height:21px;background:#d4d4d4;"></div>
<svg class="b" style="left:591px;top:533px;" width="14" height="17" viewBox="0 0 14 17"><rect x="1" y="3" width="11" height="13" fill="#fff" stroke="#9a9a9a" stroke-width="1.2"/><rect x="4" y="1" width="5" height="3" fill="#fff" stroke="#9a9a9a" stroke-width="1"/><text x="6.5" y="13" text-anchor="middle" font-family="Liberation Sans" font-size="8" fill="#5a8ad0">?</text></svg>
<svg class="b" style="left:619px;top:534px;" width="16" height="16" viewBox="0 0 16 16"><path d="M6.5 1.5 H11.5 L14.5 4.5 V14.5 H6.5 Z" fill="#fff" stroke="#9a9a9a" stroke-width="1.1"/><rect x="1.5" y="4.5" width="6.5" height="8.5" fill="#fff" stroke="#9a9a9a" stroke-width="1.1"/><g fill="#4a80c8"><rect x="2.5" y="6" width="4.5" height="1.1"/><rect x="2.5" y="8" width="4.5" height="1.1"/><rect x="2.5" y="10" width="4.5" height="1.1"/></g></svg>
<svg class="b" style="left:658px;top:534px;" width="17" height="15" viewBox="0 0 17 15"><path d="M2 5 L4 1.5 H7 V7 H10 V1.5 H13 L15 5 L16 13 H10 V9 H7 V13 H1 Z" fill="#6a6a6a"/><rect x="1.5" y="9" width="5" height="4" fill="#7e7e7e"/><rect x="10.5" y="9" width="5" height="4" fill="#7e7e7e"/></svg>
<svg class="b" style="left:684px;top:530px;" width="26" height="24" viewBox="0 0 26 24"><path d="M18.6 4.2 L20.2 5.7" stroke="#4a80c0" stroke-width="2.8" stroke-linecap="round"/><path d="M17.2 6.6 L11.8 12.4" stroke="#4a80c0" stroke-width="3.8"/><path d="M9.6 12.6 L11.7 14.4 L9.2 15.6 Z" fill="#4a80c0"/><path d="M7.3 15.3 C5 15.6 3.6 17.2 4.4 18.8 C5.8 20.5 9 20.2 12 18.4 C15 16.6 18.2 15.8 20.6 19.6" stroke="#7aa4d4" stroke-width="1.3" fill="none"/></svg>
<div class="b" style="left:716px;top:532px;width:1px;height:21px;background:#d4d4d4;"></div>
<svg class="b" style="left:729px;top:535px;" width="14" height="13" viewBox="0 0 14 13"><rect x="0.6" y="0.6" width="12.8" height="11.8" fill="#fff" stroke="#8e8e8e" stroke-width="1.2"/><rect x="2" y="2" width="10" height="9" fill="#5a96d8"/><rect x="3.3" y="3.5" width="3.5" height="1" fill="#fff"/><rect x="3.3" y="5.5" width="6.5" height="1" fill="#fff"/><rect x="3.3" y="7.5" width="6.5" height="1" fill="#fff"/></svg>
<svg class="b" style="left:758px;top:534px;" width="15" height="15" viewBox="0 0 15 15"><rect x="0.5" y="0.5" width="13.5" height="13.5" rx="2.2" fill="#6aa68e"/><rect x="3" y="2" width="8.5" height="10" fill="#fff"/><g fill="#8eaad0"><rect x="4.5" y="3.7" width="5" height="1"/><rect x="4.5" y="5.7" width="5" height="1"/><rect x="4.5" y="7.7" width="5" height="1"/><rect x="4.5" y="9.7" width="5" height="1"/></g></svg>
<svg class="b" style="left:788px;top:534px;" width="15" height="15" viewBox="0 0 15 15"><rect x="0.5" y="0.5" width="13.5" height="13.5" rx="2.2" fill="#6aa68e"/><rect x="2" y="2.5" width="4.5" height="8.5" fill="#fff"/><rect x="7.7" y="2.5" width="4.5" height="8.5" fill="#fff"/><g fill="#8eaad0"><rect x="2.8" y="4.2" width="3" height="0.9"/><rect x="2.8" y="6.2" width="3" height="0.9"/><rect x="2.8" y="8.2" width="3" height="0.9"/><rect x="8.5" y="4.2" width="3" height="0.9"/><rect x="8.5" y="6.2" width="3" height="0.9"/><rect x="8.5" y="8.2" width="3" height="0.9"/></g></svg>
<svg class="b" style="left:819px;top:534px;" width="15" height="15" viewBox="0 0 15 15"><rect x="0.5" y="0.5" width="13.5" height="13.5" rx="2.2" fill="#6aa68e"/><rect x="2.5" y="2.2" width="4" height="4.2" fill="#fff"/><rect x="7.7" y="2.2" width="4" height="4.2" fill="#fff"/><rect x="2.5" y="7.7" width="4" height="4.2" fill="#fff"/><rect x="7.7" y="7.7" width="4" height="4.2" fill="#fff"/><g fill="#a8c0dc"><rect x="3.5" y="3.5" width="2" height="0.8"/><rect x="8.7" y="3.5" width="2" height="0.8"/><rect x="3.5" y="9" width="2" height="0.8"/><rect x="8.7" y="9" width="2" height="0.8"/></g></svg>
<svg class="b" style="left:846px;top:538px;" width="10" height="8" viewBox="0 0 10 8"><path d="M1.2 1.5 L4.8 5.2 L8.4 1.5" stroke="#333" stroke-width="1.4" fill="none"/></svg>
<svg class="b" style="left:868px;top:535px;" width="14" height="13" viewBox="0 0 14 13"><rect x="0.6" y="0.6" width="12.8" height="11.8" fill="#fff" stroke="#a0a0a0" stroke-width="1.2"/><g fill="#b4c8e0"><rect x="3.5" y="2" width="7" height="0.9"/><rect x="3.5" y="4" width="7" height="0.9"/><rect x="3.5" y="6" width="7" height="0.9"/><rect x="3.5" y="8" width="7" height="0.9"/><rect x="3.5" y="10" width="7" height="0.9"/></g><path d="M0.8 5.6 L4 2.8 V8.4 Z M13.2 5.6 L10 2.8 V8.4 Z" fill="#3a7ac8"/><rect x="3" y="5.1" width="8" height="1" fill="#3a7ac8"/></svg>
<div class="b" style="left:1902px;top:578px;width:5px;height:53px;background:#a6aaad;border-radius:2px;"></div>
<div class="b" style="left:477px;top:571px;width:1356px;height:464px;border:2px solid #3a66c2;border-bottom:none;background:#fff;"></div>
<div class="t" style="left:1154.5px;top:619.4px;font-size:24.6px;line-height:24.6px;font-weight:700;transform:translateX(-50%);">Отчет кассира</div>
<div class="t" style="left:532.2px;top:655.6px;font-size:15px;line-height:15px;letter-spacing:0.13px;">Дата  фискализации: с 01.10.2022 по 30.10.2022.</div>
<div class="t" style="left:532.2px;top:673.6px;font-size:15px;line-height:15px;">Группировка  по  кассиру. Фискализация: Все.</div>
<div class="t" style="left:1778.3px;top:694.9px;font-size:15px;line-height:15px;transform:translateX(-100%);">29.11.2023 14:48:09</div>
<div class="b" style="left:523px;top:721px;width:1263px;height:314px;border:1px solid #000;border-bottom:none;"></div>
<div class="b" style="left:523px;top:853px;width:1263px;height:1px;background:#000;"></div>
<div class="b" style="left:528px;top:727px;width:10px;height:10px;border:1px solid #c8c8c8;background:#fff;"></div>
<div class="b" style="left:530px;top:731px;width:6px;height:1px;background:#a8a8a8;"></div>
<div class="b" style="left:532px;top:729px;width:1px;height:6px;background:#a8a8a8;"></div>
<div class="t" style="left:548.2px;top:728.0px;font-size:15.3px;line-height:15.3px;font-weight:700;">Борисова Галина Юрьевна</div>
<div class="t" style="left:1214.1px;top:722.6px;font-size:14.6px;line-height:14.6px;transform:translateX(-100%);">Наличными:</div>
<div class="t" style="left:1360.2px;top:722.6px;font-size:14.6px;line-height:14.6px;transform:translateX(-100%);">-9 200,00</div>
<div class="t" style="left:1214.1px;top:740.8px;font-size:14.6px;line-height:14.6px;transform:translateX(-100%);">Кредитной картой:</div>
<div class="t" style="left:1360.2px;top:740.8px;font-size:14.6px;line-height:14.6px;transform:translateX(-100%);">68 501,00</div>
<div class="t" style="left:1214.1px;top:759.0px;font-size:14.6px;line-height:14.6px;transform:translateX(-100%);">Внешними платежами:</div>
<div class="t" style="left:1360.2px;top:759.0px;font-size:14.6px;line-height:14.6px;transform:translateX(-100%);">0,00</div>
<div class="t" style="left:1214.1px;top:777.2px;font-size:14.6px;line-height:14.6px;transform:translateX(-100%);">Сертификатами:</div>
<div class="t" style="left:1360.2px;top:777.2px;font-size:14.6px;line-height:14.6px;transform:translateX(-100%);">0,00</div>
<div class="t" style="left:1214.1px;top:795.4px;font-size:14.6px;line-height:14.6px;transform:translateX(-100%);">Прочее:</div>
<div class="t" style="left:1360.2px;top:795.4px;font-size:14.6px;line-height:14.6px;transform:translateX(-100%);">0,00</div>
<div class="t" style="left:1214.1px;top:813.6px;font-size:14.6px;line-height:14.6px;transform:translateX(-100%);">Внешняя система лояльности (засчет аванса):</div>
<div class="t" style="left:1360.2px;top:813.6px;font-size:14.6px;line-height:14.6px;transform:translateX(-100%);">0,00</div>
<div class="t" style="left:1214.1px;top:831.8px;font-size:14.6px;line-height:14.6px;transform:translateX(-100%);">Оплатой через Интернет:</div>
<div class="t" style="left:1360.2px;top:831.8px;font-size:14.6px;line-height:14.6px;transform:translateX(-100%);">0,00</div>
<div class="t" style="left:1437.1px;top:795.4px;font-size:14.6px;line-height:14.6px;transform:translateX(-100%);">Без НДС:</div>
<div class="t" style="left:1529.0px;top:795.4px;font-size:14.6px;line-height:14.6px;transform:translateX(-100%);">59 301,00</div>
<div class="t" style="left:1437.1px;top:813.6px;font-size:14.6px;line-height:14.6px;transform:translateX(-100%);">С НДС:</div>
<div class="t" style="left:1529.0px;top:813.6px;font-size:14.6px;line-height:14.6px;transform:translateX(-100%);">0,00</div>
<div class="b" style="left:1439px;top:834px;width:92px;height:1px;background:#000;"></div>
<div class="t" style="left:1529.0px;top:834.9px;font-size:14.6px;line-height:14.6px;transform:translateX(-100%);">59 301,00</div>
<div class="t" style="left:1692.5px;top:777.4px;font-size:14.6px;line-height:14.6px;transform:translateX(-100%);">Без фискализации:</div>
<div class="t" style="left:1780.8px;top:777.4px;font-size:14.6px;line-height:14.6px;transform:translateX(-100%);">0</div>
<div class="t" style="left:1692.5px;top:795.5px;font-size:14.6px;line-height:14.6px;transform:translateX(-100%);">Не фискализировано:</div>
<div class="t" style="left:1780.8px;top:795.5px;font-size:14.6px;line-height:14.6px;transform:translateX(-100%);">0</div>
<div class="t" style="left:1692.5px;top:813.6px;font-size:14.6px;line-height:14.6px;transform:translateX(-100%);">Фискализировано:</div>
<div class="t" style="left:1780.8px;top:813.6px;font-size:14.6px;line-height:14.6px;transform:translateX(-100%);">10</div>
<div class="b" style="left:1694px;top:830px;width:92px;height:1px;background:#000;"></div>
<div class="t" style="left:1780.8px;top:832.3px;font-size:14.6px;line-height:14.6px;transform:translateX(-100%);">10</div>
<div class="b" style="left:528px;top:859px;width:10px;height:10px;border:1px solid #c8c8c8;background:#fff;"></div>
<div class="b" style="left:530px;top:863px;width:6px;height:1px;background:#a8a8a8;"></div>
<div class="b" style="left:532px;top:861px;width:1px;height:6px;background:#a8a8a8;"></div>
<div class="t" style="left:548.2px;top:860.0px;font-size:15.3px;line-height:15.3px;font-weight:700;">Варданян Галина Леонтьевна</div>
<div class="t" style="left:1214.1px;top:854.6px;font-size:14.6px;line-height:14.6px;transform:translateX(-100%);">Наличными:</div>
<div class="t" style="left:1360.2px;top:854.6px;font-size:14.6px;line-height:14.6px;transform:translateX(-100%);">212 500,00</div>
<div class="t" style="left:1214.1px;top:872.8px;font-size:14.6px;line-height:14.6px;transform:translateX(-100%);">Кредитной картой:</div>
<div class="t" style="left:1360.2px;top:872.8px;font-size:14.6px;line-height:14.6px;transform:translateX(-100%);">1 099 500,00</div>
<div class="t" style="left:1214.1px;top:891.0px;font-size:14.6px;line-height:14.6px;transform:translateX(-100%);">Внешними платежами:</div>
<div class="t" style="left:1360.2px;top:891.0px;font-size:14.6px;line-height:14.6px;transform:translateX(-100%);">0,00</div>
<div class="t" style="left:1214.1px;top:909.2px;font-size:14.6px;line-height:14.6px;transform:translateX(-100%);">Сертификатами:</div>
<div class="t" style="left:1360.2px;top:909.2px;font-size:14.6px;line-height:14.6px;transform:translateX(-100%);">0,00</div>
<div class="t" style="left:1214.1px;top:927.4px;font-size:14.6px;line-height:14.6px;transform:translateX(-100%);">Прочее:</div>
<div class="t" style="left:1360.2px;top:927.4px;font-size:14.6px;line-height:14.6px;transform:translateX(-100%);">0,00</div>
<div class="t" style="left:1214.1px;top:945.6px;font-size:14.6px;line-height:14.6px;transform:translateX(-100%);">Внешняя система лояльности (засчет аванса):</div>
<div class="t" style="left:1360.2px;top:945.6px;font-size:14.6px;line-height:14.6px;transform:translateX(-100%);">0,00</div>
<div class="t" style="left:1214.1px;top:963.8px;font-size:14.6px;line-height:14.6px;transform:translateX(-100%);">Оплатой через Интернет:</div>
<div class="t" style="left:1360.2px;top:963.8px;font-size:14.6px;line-height:14.6px;transform:translateX(-100%);">0,00</div>
<div class="t" style="left:1437.1px;top:927.4px;font-size:14.6px;line-height:14.6px;transform:translateX(-100%);">Без НДС:</div>
<div class="t" style="left:1529.0px;top:927.4px;font-size:14.6px;line-height:14.6px;transform:translateX(-100%);">1 312 000,00</div>
<div class="t" style="left:1437.1px;top:945.6px;font-size:14.6px;line-height:14.6px;transform:translateX(-100%);">С НДС:</div>
<div class="t" style="left:1529.0px;top:945.6px;font-size:14.6px;line-height:14.6px;transform:translateX(-100%);">0,00</div>
<div class="b" style="left:1439px;top:966px;width:92px;height:1px;background:#000;"></div>
<div class="t" style="left:1529.0px;top:966.9px;font-size:14.6px;line-height:14.6px;transform:translateX(-100%);">1 312 000,00</div>
<div class="t" style="left:1692.5px;top:909.4px;font-size:14.6px;line-height:14.6px;transform:translateX(-100%);">Без фискализации:</div>
<div class="t" style="left:1780.8px;top:909.4px;font-size:14.6px;line-height:14.6px;transform:translateX(-100%);">0</div>
<div class="t" style="left:1692.5px;top:927.5px;font-size:14.6px;line-height:14.6px;transform:translateX(-100%);">Не фискализировано:</div>
<div class="t" style="left:1780.8px;top:927.5px;font-size:14.6px;line-height:14.6px;transform:translateX(-100%);">0</div>
<div class="t" style="left:1692.5px;top:945.6px;font-size:14.6px;line-height:14.6px;transform:translateX(-100%);">Фискализировано:</div>
<div class="t" style="left:1780.8px;top:945.6px;font-size:14.6px;line-height:14.6px;transform:translateX(-100%);">59</div>
<div class="b" style="left:1694px;top:962px;width:92px;height:1px;background:#000;"></div>
<div class="t" style="left:1780.8px;top:964.3px;font-size:14.6px;line-height:14.6px;transform:translateX(-100%);">59</div>
<div class="b" style="left:413px;top:970px;width:1502px;height:65px;background:#fff;"></div>
<div class="b" style="left:1915px;top:523px;width:4px;height:512px;background:#e9e9e9;"></div>
<div class="b" style="left:413px;top:989px;width:1076px;height:42px;background:#fff;border:1px solid #939393;border-radius:3px;"></div>
<div class="b" style="left:1497px;top:989px;width:418px;height:42px;background:#fff;border:1px solid #939393;border-radius:3px;"></div>
<div class="b" style="left:413px;top:1031px;width:1506px;height:4px;background:#ececec;"></div>
<div class="b" style="left:1489px;top:989px;width:8px;height:42px;background:#fff;"></div>
<svg class="b" style="left:426px;top:1005px;" width="11" height="11" viewBox="0 0 11 11"><rect x="0" y="0" width="2.5" height="10.5" fill="#4a80c4"/><path d="M10 0 V10.5 L3 5.25 Z" fill="#4a80c4"/></svg>
<svg class="b" style="left:458px;top:1005px;" width="8" height="11" viewBox="0 0 8 11"><path d="M7 0 V10.5 L0 5.25 Z" fill="#4a80c4"/></svg>
<div class="b" style="left:481px;top:998px;width:1px;height:25px;background:#dcdcdc;"></div>
<div class="t" style="left:498.8px;top:1003.2px;font-size:14.4px;line-height:14.4px;color:#333;">Page 1 of 3</div>
<div class="b" style="left:589px;top:998px;width:1px;height:25px;background:#dcdcdc;"></div>
<svg class="b" style="left:606px;top:1005px;" width="8" height="11" viewBox="0 0 8 11"><path d="M0 0 V10.5 L7 5.25 Z" fill="#4a80c4"/></svg>
<svg class="b" style="left:633px;top:1005px;" width="11" height="11" viewBox="0 0 11 11"><path d="M0 0 V10.5 L7 5.25 Z" fill="#4a80c4"/><rect x="7.5" y="0" width="2.5" height="10.5" fill="#4a80c4"/></svg>
<svg class="b" style="left:1509px;top:1004px;" width="12" height="13" viewBox="0 0 12 13"><rect x="0.5" y="0.5" width="10" height="11.5" fill="none" stroke="#a8bedc" stroke-width="1.2"/></svg>
<svg class="b" style="left:1539px;top:1004px;" width="12" height="13" viewBox="0 0 12 13"><path d="M1 0.5 V12 M10.5 0.5 V12 M1 6.25 H10.5 M3 4.5 L1.2 6.25 L3 8 M8.5 4.5 L10.3 6.25 L8.5 8" stroke="#a8bedc" stroke-width="1.2" fill="none"/></svg>
<div class="b" style="left:1559px;top:996px;width:30px;height:30px;background:#dcdcdc;border-radius:2px;"></div>
<svg class="b" style="left:1568px;top:1004px;" width="12" height="13" viewBox="0 0 12 13"><g fill="none" stroke="#a8bedc" stroke-width="1.2"><rect x="1" y="1" width="4" height="4.5"/><rect x="7" y="1" width="4" height="4.5"/><rect x="1" y="7.5" width="4" height="4.5"/><rect x="7" y="7.5" width="4" height="4.5"/></g></svg>
<div class="b" style="left:1594px;top:998px;width:1px;height:25px;background:#dcdcdc;"></div>
<div class="t" style="left:1609.0px;top:1004.7px;font-size:12.4px;line-height:12.4px;color:#6a6a6a;">100%</div>
<div class="b" style="left:1664px;top:1010px;width:10px;height:1px;background:#777;"></div>
<div class="b" style="left:1777px;top:1002px;width:7px;height:15px;background:#777;"></div>
<div class="b" style="left:1886px;top:1010px;width:11px;height:1px;background:#444;"></div>
<div class="b" style="left:1891px;top:1005px;width:1px;height:11px;background:#444;"></div>
<div class="b stripe" style="left:0;top:1035px;width:1919px;height:11px;background-color:#2b3034;--sc:rgba(70,74,84,0.35);"></div>
<div class="b stripe" style="left:0;top:1045px;width:1919px;height:34px;background-color:#353c40;--sc:rgba(74,78,88,0.75);"></div>
<div class="b" style="left:0px;top:1078px;width:1919px;height:1px;background:#1e2124;"></div>
<div class="b" style="left:60px;top:1078px;width:360px;height:1px;background:#d8d8d8;"></div>
<svg class="b" style="left:6px;top:1055px;" width="12" height="17" viewBox="0 0 12 17"><circle cx="6" cy="4" r="3" fill="#e0b8a8"/><path d="M3 3 q0 -3 3 -3 q3 0 3 3" fill="#888"/><path d="M0.5 16 V11 q0 -4 5.5 -4 q5.5 0 5.5 4 V16 Z" fill="#f4f4f4"/><path d="M5.5 8 L6 12 L6.5 8 Z" fill="#6a9ac8"/></svg>
<div class="t" style="left:22.0px;top:1054.6px;font-size:15.2px;line-height:15.2px;color:#fff;">admin [Админов Админ Админович]</div>
<div class="t" style="left:1466.0px;top:1055.1px;font-size:14.6px;line-height:14.6px;color:#2a2e32;">113161 ms</div>
<div class="t" style="left:1550.7px;top:1055.5px;font-size:14.2px;line-height:14.2px;color:#fff;">Версия: 2.32.1966 x86</div>
<div class="b" style="left:1704px;top:1051px;width:207px;height:26px;background:#2b8c2b;border:1px solid #1f6e1f;"></div>
<svg class="b" style="left:1709px;top:1055px;" width="18" height="18" viewBox="0 0 18 18"><path d="M3.5 8 A5.5 5.5 0 0 1 13.5 5.5" stroke="#fff" stroke-width="2.6" fill="none"/><path d="M15.5 2 V8 H9.5 Z" fill="#fff"/><path d="M14.5 10 A5.5 5.5 0 0 1 4.5 12.5" stroke="#fff" stroke-width="2.6" fill="none"/><path d="M2.5 16 V10 H8.5 Z" fill="#fff"/></svg>
<div class="t" style="left:1731.7px;top:1055.3px;font-size:14.4px;line-height:14.4px;color:#fff;">Статус: Свободен, к. 232</div>
</body></html>
